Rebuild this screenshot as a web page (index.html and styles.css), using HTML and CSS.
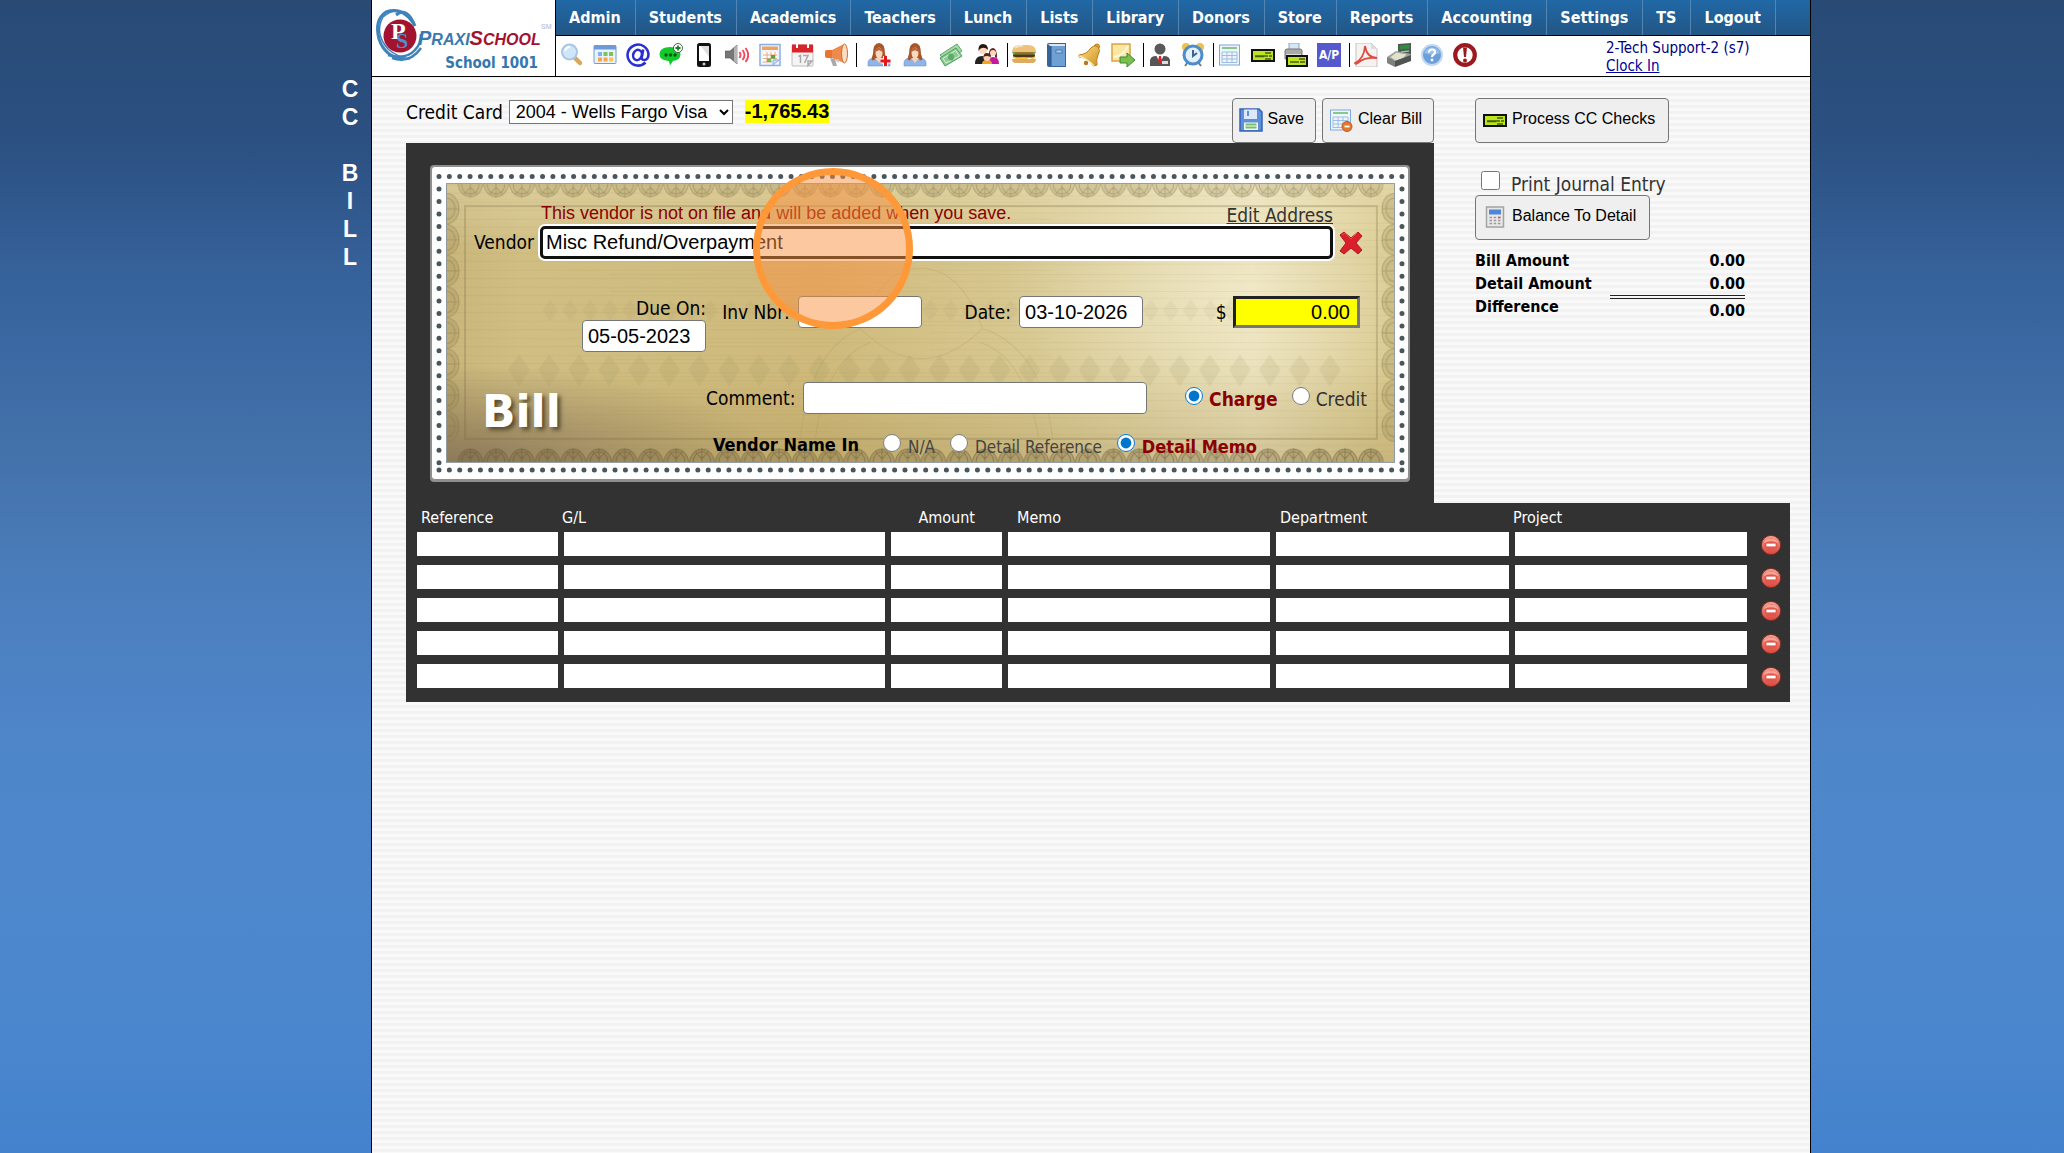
FILE: index.html
```
<!DOCTYPE html>
<html lang="en">
<head>
<meta charset="utf-8">
<title>CC Bill - PraxiSchool</title>
<link rel="stylesheet" href="styles.css">
</head>
<body>
<svg class="defs" aria-hidden="true">
  <defs>
    <linearGradient id="gGold" x1="0" y1="0" x2="1" y2="1"><stop offset="0" stop-color="#fbe08a"/><stop offset="1" stop-color="#cf8f1f"/></linearGradient>
    <linearGradient id="gRed" x1="0" y1="0" x2="0" y2="1"><stop offset="0" stop-color="#f7a08f"/><stop offset="1" stop-color="#d8463c"/></linearGradient>
    <symbol id="i-check" viewBox="0 0 24 24"><rect x="1" y="7" width="22" height="11" fill="#b9e61d" stroke="#111" stroke-width="2"/><path d="M4 13h11M14 10h6M15 13h2M18 13h3M4 13.500h9M14 16h6" stroke="#4d5d0b" stroke-width="1.500"/></symbol>
    <symbol id="i-sheet" viewBox="0 0 24 24"><rect x="1.500" y="2" width="20" height="20" fill="#eef5fd" stroke="#7fa8dc"/><rect x="4" y="4" width="15" height="2" fill="#86c98a"/><path d="M4 9h15M4 12.500h15M4 16h15M4 19.500h15M4 9v10.500M9 9v10.500M14 9v10.500M19 9v10.500" stroke="#9dbde6" fill="none"/></symbol>
    <symbol id="i-minus" viewBox="0 0 24 24"><circle cx="12" cy="12" r="10.500" fill="url(#gRed)" stroke="#7a2b26"/><circle cx="12" cy="12" r="7" fill="#e2574c"/><path d="M4 10a9 9 0 0 1 16 0q-8-4-16 0z" fill="#fbc3b8" opacity=".7"/><rect x="7" y="10.500" width="10" height="3" fill="#fff"/></symbol>
    <symbol id="i-woman" viewBox="0 0 24 24"><path d="M1 23v-4q1-4 7-4h8q6 0 7 4v4z" fill="#8fb4e8" stroke="#6f95cf" stroke-width=".6"/><path d="M5 17q-1-1 1-6 0-11 6-11t6 11q2 5 1 6-2 1-3-1H8q-1 2-3 1z" fill="#a8562c"/><path d="M8 15h8l-4 5z" fill="#f6d3b3"/><ellipse cx="12" cy="10" rx="3.500" ry="5.500" fill="#f8d9bd"/><path d="M8 8q2-5 5-3 3 1 3 4-3-1-4-2-2 2-4 1z" fill="#b9683a"/></symbol>
  </defs>
</svg>

<div class="page">
  <aside class="side"><h1 class="side-title"><span>C</span><span>C</span><span>&nbsp;</span><span>B</span><span>I</span><span>L</span><span>L</span></h1></aside>

  <div class="app">
    <header class="top">
      <div class="brand">
        <svg class="logo" viewBox="0 0 183 58" role="img" aria-label="PraxiSchool">
          <g fill="none" stroke="#3f83bd"><path d="M24 15Q35 6 43 26M43 26Q32 6 14 12Q2 20 7 39Q13 57 31 59" stroke-width="3"/><path d="M39 20Q27 3 11 17Q2 33 16 49Q25 57 38 59" stroke-width="1.500"/><path d="M16 55Q34 60 43 50Q49 44 49 34M20 58Q38 64 49 48" stroke-width="2.500"/></g>
          <circle cx="28" cy="36" r="16.500" fill="#a3122e"/>
          <text x="19" y="39" class="mono-p">P</text><text x="24" y="48" class="mono-s">S</text>
          <text x="46" y="45" class="mark">P<tspan class="mark-sm">RAXI</tspan><tspan class="mark-red">S</tspan><tspan class="mark-sm mark-red">CHOOL</tspan></text>
          <text x="169" y="29" class="sm">SM</text>
        </svg>
        <div class="school">School 1001</div>
      </div>
      <div class="bars">
        <nav class="menu">
          <a href="#">Admin</a><a href="#">Students</a><a href="#">Academics</a><a href="#">Teachers</a><a href="#">Lunch</a><a href="#">Lists</a><a href="#">Library</a><a href="#">Donors</a><a href="#">Store</a><a href="#">Reports</a><a href="#">Accounting</a><a href="#">Settings</a><a href="#">TS</a><a href="#">Logout</a>
        </nav>
        <div class="tools">
          <div class="group">
            <button aria-label="Search"><svg viewBox="0 0 24 24"><path d="M14 14l6 6" stroke="#d9a65c" stroke-width="4.500" stroke-linecap="round"/><circle cx="9.500" cy="9" r="7.500" fill="#cfe6fa" stroke="#a9c6e6" stroke-width="2"/><path d="M5 8q1-4 5-4" stroke="#fff" stroke-width="2" fill="none"/></svg></button>
            <button aria-label="Calendar"><svg viewBox="0 0 24 24"><rect x="1" y="2.500" width="22" height="18" rx="1" fill="#eaf3fd" stroke="#6c9bd8"/><rect x="1" y="2.500" width="22" height="4" fill="#6c9bd8"/><path d="M5 9h4v4H5z" fill="#7db4ee"/><path d="M10.500 9h4v4h-4zM16 9h4v4h-4z" fill="#7fc257"/><path d="M5 14.500h4v4H5zM10.500 14.500h4v4h-4z" fill="#f3a64a"/><path d="M16 14.500h4v4h-4z" fill="#f5c84f"/></svg></button>
            <button aria-label="Email"><svg viewBox="0 0 24 24" fill="none" stroke="#2a2fd0" stroke-width="2.600"><path d="M19.500 19.500A10.500 10.500 0 1 1 22.500 11q0 6-4.500 6-3 0-2-4l1.200-6.500"/><ellipse cx="11.500" cy="12" rx="4.300" ry="5.200" transform="rotate(20 11.500 12)"/></svg></button>
            <button aria-label="Text message"><svg viewBox="0 0 24 24"><path d="M11 4q10 0 10.500 7 0 6-7.500 7l-3 4.500-1-4.500Q0 17 .500 11 1 4 11 4z" fill="#13c92c"/><circle cx="7" cy="12" r="1.700" fill="#04550f"/><circle cx="11.500" cy="12" r="1.700" fill="#04550f"/><circle cx="16" cy="12" r="1.700" fill="#04550f"/><circle cx="19" cy="5" r="4.500" fill="#fff" stroke="#333" stroke-width=".8"/><path d="M19 2.500v5M16.500 5h5" stroke="#13851f" stroke-width="1.800"/></svg></button>
            <button aria-label="Phone"><svg viewBox="0 0 24 24"><rect x="5" y="0" width="14" height="24" rx="2.500" fill="#111"/><rect x="7" y="3" width="10" height="15" fill="#fff"/><path d="M9 3h8v11z" fill="#ddd"/><circle cx="12" cy="21" r="1.500" fill="#ccc"/></svg></button>
            <button aria-label="Announcement"><svg viewBox="0 0 24 24"><path d="M0 8h5l7-6v19l-7-6H0z" fill="#777" stroke="#555" stroke-width=".6"/><path d="M9 5v13l3 3V2z" fill="#b5b5b5"/><path d="M14.500 9q2 3 0 6M17.500 7q4 5 0 10M20.500 5q5.500 7 0 14" stroke="#ee4a5c" stroke-width="1.900" fill="none"/></svg></button>
            <button aria-label="Schedule"><svg viewBox="0 0 24 24"><rect x="2" y="1.500" width="20" height="21" fill="#edf4fc" stroke="#8ab0e2" stroke-width="1.500"/><rect x="4" y="3.500" width="16" height="3.500" fill="#f0a060"/><path d="M5 9h14v10H5z" fill="#fff"/><path d="M9 9v10M13 9v10M17 9v10M5 12h14M5 15.500h14M5 19h9" stroke="#e9a77c"/><path d="M13 12h4v3.500h-4z" fill="#4fa64f"/><path d="M9 15.500h4V19H9z" fill="#6dbb63"/><path d="M15 22v-5h6z" fill="#c9def5" stroke="#8ab0e2"/></svg></button>
            <button aria-label="Events"><svg viewBox="0 0 24 24"><rect x="1" y="2" width="21" height="21" rx="1" fill="#f4f4f4" stroke="#bdbdbd"/><path d="M1 1.500h21v8H1z" fill="#d8252b"/><path d="M5 0h2v5H5zM16 0h2v5h-2z" fill="#fff"/><path d="M7.500 13.500l2-1V20M12 12.500h5L13.500 20M17 18h4l-4 4.500z" fill="none" stroke="#aaa" stroke-width="1.500"/></svg></button>
            <button aria-label="Broadcast"><svg viewBox="0 0 24 24"><path d="M1 9q0-2 2-2h5v8H3q-2 0-2-2z" fill="#e87430"/><path d="M8 7L20 1v19L8 15z" fill="#ed8a4c"/><ellipse cx="20.500" cy="10.500" rx="3" ry="9.500" fill="#fbdcc4" stroke="#cf6d2f"/><path d="M6 15l3 8h4l-2-7z" fill="#a9a9a9"/><path d="M11 17l4-1v4z" fill="#c9c9c9"/></svg></button>
          </div>
          <div class="group people">
            <button aria-label="Add student"><svg viewBox="0 0 24 24"><use href="#i-woman"/><path d="M18.500 13v10M13.500 18h10" stroke="#fff" stroke-width="5"/><path d="M18.500 13v10M13.500 18h10" stroke="#e6141b" stroke-width="3"/></svg></button>
            <button aria-label="Student"><svg viewBox="0 0 24 24"><use href="#i-woman"/></svg></button>
            <button aria-label="Payments"><svg viewBox="0 0 24 24"><path d="M1 12L18 1l5 7L7 19z" fill="#a5d8a5" stroke="#5aa868"/><path d="M1 15l16-10 6 8L6 23z" fill="#8ccb92" stroke="#4f9e5e"/><path d="M4 15.500l12.500-8 4 5.500L7 20z" fill="none" stroke="#d5f0d4"/><ellipse cx="12" cy="14" rx="3" ry="3.500" fill="#5dab6b"/></svg></button>
            <button aria-label="Family"><svg viewBox="0 0 24 24"><path d="M0 21q0-8 7-8 5 0 6 8z" fill="#222"/><path d="M12 21q0-7 6-7t6 7z" fill="#c4189f"/><circle cx="8" cy="7" r="4" fill="#fbd9bd"/><path d="M3.500 8Q3 1 8 1t5 6q-3-3-6-2-2 0-3.500 3z" fill="#27150f"/><path d="M14 15q-1-10 4-10 4 0 4 10l-2-1V9h-4v5z" fill="#6b1e1c"/><circle cx="18" cy="10" r="3" fill="#fbd9bd"/><path d="M7 21q0-4 5-4t5 4z" fill="#f4a51f"/><circle cx="12" cy="14.500" r="3.500" fill="#f8d2b4"/><path d="M8.500 14q0-4 3.500-4t3.500 4q-4-2-7 0z" fill="#53281a"/></svg></button>
          </div>
          <div class="group">
            <button aria-label="Lunch"><svg viewBox="0 0 24 24"><path d="M0 9q0-7 8-7h8q8 0 8 7z" fill="#edc27a"/><path d="M3 5q4-3 8-2" stroke="#faead0" stroke-width="1.500" fill="none"/><path d="M0 9h24l-2 3H2z" fill="#62a23a"/><path d="M3 9.500h18v1.500H3z" fill="#e5452f"/><path d="M1 11.500h22v3H1z" fill="#5c3118"/><path d="M1 14l5 2 6-1 6 2 5-3" stroke="#f5c43c" stroke-width="1.500" fill="none"/><path d="M0 16h24q0 4-4 4H4q-4 0-4-4z" fill="#deab61"/></svg></button>
            <button aria-label="Gradebook"><svg viewBox="0 0 24 24"><path d="M4 0h17v24H4q-2 0-2-2V2q0-2 2-2z" fill="#34649c"/><path d="M6 3h14v20H6z" fill="#6fa0d4"/><path d="M3 1h17v2H5z" fill="#dbe6f2"/><path d="M6 3v20" stroke="#2a5487"/><rect x="11" y="7" width="6" height="3" fill="#a9cbed" stroke="#34649c" stroke-width=".7"/></svg></button>
            <button aria-label="Alerts"><svg viewBox="0 0 24 24"><circle cx="19" cy="3.500" r="2.500" fill="#e0a638" stroke="#b87b18"/><path d="M1 12q8-1 11-6 4-5 8-2 3 3 0 8-2 4-1 10l-4 1Q12 15 1 14z" fill="url(#gGold)" stroke="#b97d17"/><path d="M1 13q9 3 15 10" stroke="#fbe9ae" stroke-width="1.500" fill="none"/><circle cx="8" cy="20" r="2.200" fill="#b2791c"/></svg></button>
            <button aria-label="Send note"><svg viewBox="0 0 24 24"><rect x="1" y="1" width="18" height="17" fill="#fce6a4" stroke="#dba441" stroke-width="1.500"/><path d="M3 14q9-1 14-11" stroke="#fff7dc" stroke-width="2" fill="none"/><path d="M9 14h7v-4l8 7-8 7v-4H9z" fill="#79bf4f" stroke="#3c8a2c"/></svg></button>
          </div>
          <div class="group">
            <button aria-label="Staff"><svg viewBox="0 0 24 24"><path d="M2 23v-6q1-4 6-4h8q5 0 6 4v6z" fill="#565656"/><circle cx="12" cy="6" r="5.500" fill="#595959"/><path d="M8 12l4 8 4-8z" fill="#fff"/><path d="M11 13h2l1 5-2 3-2-3z" fill="#d8252b"/><path d="M14 18h6v3h-6z" fill="#ddd"/></svg></button>
            <button aria-label="Time clock"><svg viewBox="0 0 24 24"><circle cx="5" cy="4" r="4" fill="#ecc14c"/><circle cx="19" cy="4" r="4" fill="#ecc14c"/><path d="M4 23l3-4M20 23l-3-4" stroke="#777" stroke-width="2"/><circle cx="12" cy="12" r="9" fill="#e4f0fb" stroke="#4d8dcb" stroke-width="3"/><path d="M12 7v6l4-3" stroke="#39668f" stroke-width="2" fill="none"/></svg></button>
          </div>
          <div class="group">
            <button aria-label="Ledger"><svg><use href="#i-sheet"/></svg></button>
            <button aria-label="Checks"><svg><use href="#i-check"/></svg></button>
            <button aria-label="Print checks"><svg viewBox="0 0 24 24"><path d="M5 0h10v8H5z" fill="#d5e6f7" stroke="#8aa"/><path d="M1 8q0-2 2-2h13q2 0 2 2v8H1z" fill="#a9a9a9" stroke="#777"/><path d="M2 12h15" stroke="#ddd" stroke-width="2"/><rect x="3" y="13" width="20" height="10" fill="#b9e61d" stroke="#111" stroke-width="2"/><path d="M6 19h9M15 16h6M16 19h5" stroke="#4d5d0b" stroke-width="1.500"/></svg></button>
            <button class="ap">A/P</button>
          </div>
          <div class="group">
            <button aria-label="PDF"><svg viewBox="0 0 24 24"><path d="M2 0h15l6 6v18H2z" fill="#f5f3f1" stroke="#c5c1bd"/><path d="M17 0v6h6z" fill="#ddd"/><path d="M1 20q9-4 10-17 2 12 12 12-12-1-18 4-3 3-4 1z" fill="none" stroke="#e04a41" stroke-width="1.800"/></svg></button>
            <button aria-label="Cash register"><svg viewBox="0 0 24 24"><path d="M11 1l13-1v13l-13 1z" fill="#4c5852"/><path d="M12.500 2.500l10-1v4l-10 1z" fill="#2f8d3c"/><path d="M14 9l8-1" stroke="#aab5ae" stroke-width="1.500"/><path d="M0 14l9-6 15 3-3 6-13 4z" fill="#9da39e"/><path d="M3.500 14l6-4.500 10 2-4 4-7 2z" fill="#dfe3c9"/><path d="M0 14l8 4v6l-8-4z" fill="#7d817d"/><path d="M8 18l16-6v6L8 24z" fill="#4f5451"/></svg></button>
            <button aria-label="Help"><svg viewBox="0 0 24 24"><circle cx="12" cy="12" r="10" fill="#6b9fdc" stroke="#c2d7f0" stroke-width="2"/><path d="M4 10a8.500 8.500 0 0 1 16 0q-8 3-16 0z" fill="#a9caee" opacity=".7"/><path d="M9 9.500q0-3 3-3t3 2.500q0 1.500-1.500 2.500T12 14" stroke="#fff" stroke-width="2.200" fill="none"/><circle cx="12" cy="17" r="1.400" fill="#fff"/></svg></button>
            <button aria-label="Alert"><svg viewBox="0 0 24 24"><circle cx="12" cy="12" r="9.800" fill="#fff" stroke="#9c1a1f" stroke-width="4.200"/><path d="M10 4.500h4l-1 9.500h-2z" fill="#9c1a1f"/><circle cx="12" cy="17.500" r="2" fill="#9c1a1f"/></svg></button>
          </div>
          <div class="user"><span>2-Tech Support-2 (s7)</span><a href="#">Clock In</a></div>
        </div>
      </div>
    </header>

    <main class="content">
      <section class="main-col">
        <div class="actions">
          <label for="card">Credit Card</label>
          <select id="card"><option>2004 - Wells Fargo Visa</option></select>
          <strong class="balance">-1,765.43</strong>
          <div class="buttons">
            <button class="btn"><svg viewBox="0 0 24 24"><path d="M1 1h19l3 3v19H1z" fill="#5d8fdb" stroke="#3565b5" stroke-width="1.500"/><path d="M5 1.500h13V11H5z" fill="#dde9fa"/><path d="M8 3h2v5H8z" fill="#5d8fdb"/><path d="M5 14.500h14V22H5z" fill="#f4faf2"/><path d="M6.500 16.500h11M6.500 19.500h11" stroke="#79bd6a" stroke-width="2"/></svg>Save</button>
            <button class="btn"><svg viewBox="0 0 24 24"><use href="#i-sheet"/><circle cx="18" cy="18.500" r="5" fill="#e5792b" stroke="#c2571a"/><path d="M15.500 18.500h5" stroke="#fff" stroke-width="1.800"/></svg>Clear Bill</button>
          </div>
        </div>

        <div class="check-wrap">
          <form class="check">
            <svg class="check-art" viewBox="0 0 979 316" preserveAspectRatio="none" aria-hidden="true">
              <defs>
                <linearGradient id="paper" x1="0" y1="0" x2="1" y2="0"><stop offset="0" stop-color="#c8b67b"/><stop offset=".08" stop-color="#d0be83"/><stop offset=".4" stop-color="#cfba7c"/><stop offset=".62" stop-color="#d8c993"/><stop offset=".85" stop-color="#e9e0ba"/><stop offset="1" stop-color="#d9c98f"/></linearGradient>
                <linearGradient id="shade" x1="0" y1="0" x2="0" y2="1"><stop offset="0" stop-color="#fffbe0" stop-opacity=".25"/><stop offset=".25" stop-color="#fffbe0" stop-opacity="0"/><stop offset=".65" stop-color="#9a8040" stop-opacity="0"/><stop offset="1" stop-color="#9a8040" stop-opacity=".28"/></linearGradient>
                <radialGradient id="corner" cx="0" cy="1" r=".35"><stop offset="0" stop-color="#7d6a55" stop-opacity=".75"/><stop offset="1" stop-color="#7d6a55" stop-opacity="0"/></radialGradient>
                <radialGradient id="glow"><stop offset="0" stop-color="#fffbe6" stop-opacity=".3"/><stop offset="1" stop-color="#fffbe6" stop-opacity="0"/></radialGradient>
                <pattern id="fan" width="25.700" height="15" patternUnits="userSpaceOnUse" x="27.500" y="19"><path d="M.500 0a12.400 14 0 0 0 24.700 0M4 0a8.800 10 0 0 0 17.600 0M12.800 0v14M12.800 3l-7 8M12.800 3l7 8" fill="#8a7c4c" fill-opacity=".2" stroke="#7d7045" stroke-opacity=".4"/></pattern>
                <pattern id="fanUp" width="25.700" height="15" patternUnits="userSpaceOnUse" x="27.500" y="281"><path d="M.500 15a12.400 14 0 0 1 24.700 0M4 15a8.800 10 0 0 1 17.600 0M12.800 15V1M12.800 12l-7-8M12.800 12l7-8" fill="#6f6038" fill-opacity=".25" stroke="#5f5334" stroke-opacity=".5"/></pattern>
                <pattern id="fanSide" width="13" height="31" patternUnits="userSpaceOnUse" x="17" y="28"><path d="M0 .500a12 15 0 0 1 0 30M0 5a8 10.500 0 0 1 0 21M0 15.500h12" fill="#8a7c4c" fill-opacity=".2" stroke="#7d7045" stroke-opacity=".4"/></pattern>
                <pattern id="fanSideR" width="13" height="31" patternUnits="userSpaceOnUse" x="950" y="28"><path d="M13 .500a12 15 0 0 0 0 30M13 5a8 10.500 0 0 0 0 21M13 15.500H1" fill="#8a7c4c" fill-opacity=".2" stroke="#7d7045" stroke-opacity=".4"/></pattern>
                <pattern id="gem" width="30" height="32" patternUnits="userSpaceOnUse" x="74" y="189"><path d="M15 0l11 15-11 17L4 15z" fill="#8d8255" fill-opacity=".12"/></pattern>
                <pattern id="gem2" width="20" height="22" patternUnits="userSpaceOnUse" x="110" y="134"><path d="M10 0l8 11-8 11-8-11z" fill="#8d8255" fill-opacity=".08"/></pattern>
                <pattern id="grain" width="979" height="17" patternUnits="userSpaceOnUse"><path d="M0 3h620M180 7h799M0 11h400M500 14h479" stroke="#8c7638" stroke-opacity=".09"/></pattern>
              </defs>
              <rect width="979" height="316" rx="4" fill="#8f8f8f"/>
              <rect x="2" y="2" width="975" height="311" rx="3" fill="#fff"/>
              <rect x="16" y="18" width="948" height="279" fill="#8f9aa0"/>
              <rect x="17" y="19" width="946" height="277" fill="url(#paper)"/>
              <ellipse cx="800" cy="130" rx="230" ry="110" fill="url(#glow)"/>
              <rect x="17" y="19" width="946" height="277" fill="url(#shade)"/>
              <rect x="17" y="19" width="946" height="277" fill="url(#corner)"/>
              <rect x="17" y="19" width="946" height="277" fill="url(#grain)"/>
              <rect x="35" y="41" width="911" height="232" fill="none" stroke="#6f6440" stroke-opacity=".25" stroke-width="2"/>
              <g fill="none" stroke="#a08b50" stroke-opacity=".2"><path d="M370 273q10-90 60-110 20-60 60-60t62 60q60 20 70 110M385 273q10-80 55-96M608 273q-12-80-58-96M430 163q60 60 122 0"/></g>
              <rect x="74" y="189" width="840" height="32" fill="url(#gem)"/>
              <rect x="110" y="134" width="780" height="22" fill="url(#gem2)"/>
              <rect x="27.500" y="19" width="925" height="15" fill="url(#fan)"/>
              <rect x="27.500" y="281" width="925" height="15" fill="url(#fanUp)"/>
              <rect x="17" y="28" width="13" height="248" fill="url(#fanSide)"/>
              <rect x="950" y="28" width="13" height="248" fill="url(#fanSideR)"/>
              <g fill="none" stroke="#4a565e" stroke-width="5" stroke-linecap="round">
                <path d="M9 11.500H972" stroke-dasharray="0 10.344"/><path d="M9 304H972" stroke-dasharray="0 10.344"/>
                <path d="M9 24V298" stroke-dasharray="0 12.400"/><path d="M971 24V298" stroke-dasharray="0 12.400"/>
              </g>
            </svg>

            <div class="vendor">
              <p class="notice">This vendor is not on file and will be added when you save.</p>
              <a class="edit" href="#">Edit Address</a>
              <label for="vendor">Vendor</label>
              <input id="vendor" class="vendor-input" type="text" value="Misc Refund/Overpayment">
              <button type="button" class="clear" aria-label="Clear vendor"><svg viewBox="0 0 24 24"><path d="M1 4l4-3 7 6 7-6 4 4-6 7 6 7-4 4-7-6-7 6-4-3 6-8z" fill="#d9202a" stroke="#b5161f" stroke-linejoin="round"/><path d="M3 4l3-2 6 6 6-6" stroke="#f06a6a" fill="none" opacity=".6"/></svg></button>
            </div>

            <div class="facts">
              <div class="due"><label for="due">Due On:</label><input id="due" class="short" type="text" value="05-05-2023"></div>
              <div class="fact"><label for="inv">Inv Nbr:</label><input id="inv" class="short" type="text"></div>
              <div class="fact"><label for="date">Date:</label><input id="date" class="short" type="text" value="03-10-2026"></div>
              <div class="fact money"><label for="amt">$</label><input id="amt" class="amount" type="text" value="0.00"></div>
            </div>

            <div class="foot">
              <div class="bill">Bill</div>
              <div class="comment">
                <label for="comment">Comment:</label><input id="comment" type="text">
                <div class="kinds">
                  <input type="radio" id="charge" name="kind" checked><label for="charge">Charge</label>
                  <input type="radio" id="credit" name="kind"><label for="credit">Credit</label>
                </div>
              </div>
              <div class="names">
                <strong>Vendor Name In</strong>
                <input type="radio" id="na" name="where"><label for="na">N/A</label>
                <input type="radio" id="ref" name="where"><label for="ref">Detail Reference</label>
                <input type="radio" id="memo" name="where" checked><label for="memo">Detail Memo</label>
              </div>
            </div>
            <span class="pointer" aria-hidden="true"></span>
          </form>
        </div>
      </section>

      <aside class="panel">
        <button class="btn"><svg><use href="#i-check"/></svg>Process CC Checks</button>
        <div class="print"><input type="checkbox" id="print"><label for="print">Print Journal Entry</label></div>
        <button class="btn"><svg viewBox="0 0 24 24"><rect x="3.500" y="2" width="17" height="20" fill="#e8e8e8" stroke="#a3a3a3" stroke-width="1.500"/><rect x="6" y="4.500" width="12" height="5" fill="#4f86d6"/><path d="M6.500 12.500h11M6.500 15.500h11M6.500 18.500h11" stroke="#999" stroke-width="1.600" stroke-dasharray="2.500 1.700"/><path d="M15 12.500h2.500" stroke="#e05a4a" stroke-width="1.600"/></svg>Balance To Detail</button>
        <dl class="totals">
          <dt>Bill Amount</dt><dd>0.00</dd>
          <dt>Detail Amount</dt><dd>0.00</dd>
          <dt>Difference</dt><dd class="sum">0.00</dd>
        </dl>
      </aside>

      <section class="lines">
        <table>
          <colgroup><col class="c-ref"><col class="c-gl"><col class="c-amt"><col class="c-memo"><col class="c-dept"><col class="c-proj"><col class="c-del"></colgroup>
          <thead><tr><th>Reference</th><th class="near">G/L</th><th class="num">Amount</th><th class="far">Memo</th><th>Department</th><th class="near">Project</th><th></th></tr></thead>
          <tbody>
            <tr><td><input aria-label="Reference 1"></td><td><input aria-label="G/L 1"></td><td><input aria-label="Amount 1"></td><td><input aria-label="Memo 1"></td><td><input aria-label="Department 1"></td><td><input aria-label="Project 1"></td><td><button aria-label="Remove line 1"><svg><use href="#i-minus"/></svg></button></td></tr>
            <tr><td><input aria-label="Reference 2"></td><td><input aria-label="G/L 2"></td><td><input aria-label="Amount 2"></td><td><input aria-label="Memo 2"></td><td><input aria-label="Department 2"></td><td><input aria-label="Project 2"></td><td><button aria-label="Remove line 2"><svg><use href="#i-minus"/></svg></button></td></tr>
            <tr><td><input aria-label="Reference 3"></td><td><input aria-label="G/L 3"></td><td><input aria-label="Amount 3"></td><td><input aria-label="Memo 3"></td><td><input aria-label="Department 3"></td><td><input aria-label="Project 3"></td><td><button aria-label="Remove line 3"><svg><use href="#i-minus"/></svg></button></td></tr>
            <tr><td><input aria-label="Reference 4"></td><td><input aria-label="G/L 4"></td><td><input aria-label="Amount 4"></td><td><input aria-label="Memo 4"></td><td><input aria-label="Department 4"></td><td><input aria-label="Project 4"></td><td><button aria-label="Remove line 4"><svg><use href="#i-minus"/></svg></button></td></tr>
            <tr><td><input aria-label="Reference 5"></td><td><input aria-label="G/L 5"></td><td><input aria-label="Amount 5"></td><td><input aria-label="Memo 5"></td><td><input aria-label="Department 5"></td><td><input aria-label="Project 5"></td><td><button aria-label="Remove line 5"><svg><use href="#i-minus"/></svg></button></td></tr>
          </tbody>
        </table>
      </section>
    </main>
  </div>
</div>
</body>
</html>
```
FILE: styles.css
```
:root {
  --ui: "DejaVu Sans Condensed", "DejaVu Sans", Tahoma, sans-serif;
  --form: "Liberation Sans", Arial, sans-serif;
  --dark: #323232;
}
* { box-sizing: border-box; }
body { margin: 0; font: 19px/24px var(--ui); color: #000; }
input, select, button { font-family: var(--form); margin: 0; }
p, h1, dl, dd { margin: 0; }
.defs { position: absolute; width: 0; height: 0; }

.page {
  display: grid;
  grid-template-columns: 371fr 1440fr 253fr;
  min-height: 100vh;
  background: linear-gradient(#284a75, #2b5081 12%, #37639d 25%, #4472ab 40%, #4a7dbb 50%, #4f86ca 64%, #4b87cd 88%, #4482cd);
}
.side { display: flex; justify-content: flex-end; padding: 75px 10px 0 0; }
.side-title { display: flex; flex-direction: column; align-items: center; width: 22px; color: #fff; font: bold 23px/28px var(--form); }

.app { background: repeating-linear-gradient(#f9f9f9 0 3px, #f2f2f2 3px 6px); border: solid #000; border-width: 0 1px; }

/* Header */
.top { display: flex; height: 77px; background: #fff; border-bottom: 1px solid #000; }
.brand { position: relative; width: 184px; border-right: 1px solid #000; }
.logo { display: block; width: 183px; height: 58px; overflow: visible; }
.mark { font: italic bold 20px var(--form); fill: #3a78b0; }
.mark-sm { font-size: 16px; }
.mark-red { fill: #a3122e; }
.sm { font: 7px var(--form); fill: #9db9d4; }
.mono-p { font: bold 24px "Liberation Serif", serif; fill: #fff; }
.mono-s { font: bold 22px "Liberation Serif", serif; fill: #4d8fca; }
.school { padding-right: 17px; color: #3377ad; font-size: 15px; line-height: 10px; font-weight: bold; text-align: right; }
.bars { flex: 1; min-width: 0; }
.menu { display: flex; height: 36px; border-bottom: 1px solid #000; background: linear-gradient(#2068a6, #235685); }
.menu a { padding: 0 14px 0 13px; border-right: 1px solid #5285b4; color: #fff; font-size: 16px; line-height: 35px; font-weight: bold; text-decoration: none; }
.tools { display: flex; align-items: center; height: 38px; padding-left: 4px; }
.group { display: flex; gap: 9px; padding-right: 8px; }
.group + .group { padding-left: 4px; border-left: 1px solid #000; }
.group + .group.people { gap: 12px; padding-left: 10px; }
.group button { display: block; width: 24px; height: 24px; padding: 0; border: 0; background: none; }
.tools svg { display: block; width: 24px; height: 24px; }
.group .ap { background: #5558cf; color: #fff; font: bold 12px/24px var(--ui); }
.user { display: flex; flex-direction: column; margin-left: auto; width: 204px; padding-top: 3px; font-size: 15px; line-height: 18px; color: #000080; white-space: nowrap; }
.user a { color: #0000a0; align-self: flex-start; }

/* Content */
.content { display: grid; grid-template-columns: minmax(0, 1028fr) minmax(0, 315fr); column-gap: 41px; padding: 21px 20px 0 34px; }
.actions { display: flex; align-items: flex-start; height: 45px; }
.actions label { line-height: 28px; margin-right: 6px; }
.actions select { width: 224px; height: 24px; margin-top: 2px; padding: 0 0 0 2px; border: 1px solid #767676; background: #fff; font-size: 18px; color: #000; }
.balance { margin: 2px 0 0 12px; background: #ff0; font: bold 20px/23px var(--form); }
.buttons { display: flex; gap: 6px; margin-left: auto; }
.btn { display: flex; align-items: flex-start; gap: 5px; height: 45px; padding: 9px 11px 0 6px; border: 1px solid #767676; border-radius: 4px; background: #efefef; color: #000; font-size: 16px; line-height: 21px; white-space: nowrap; }
.btn svg { width: 24px; height: 24px; }

.check-wrap { padding: 22px 24px 21px; background: var(--dark); }
.check { position: relative; height: 317px; padding: 36px 0 0; }
.check > div { position: relative; }
.check-art { position: absolute; inset: 0; width: 100%; height: 100%; }
.check input[type="text"] { height: 32px; padding: 0 5px; border: 1px solid #767676; border-radius: 4px; background: #fff; font-size: 20px; color: #000; }
.vendor { display: grid; grid-template-columns: 104px minmax(0, 1fr) auto 24px; grid-template-rows: 25px 33px; padding-right: 47px; }
.notice { grid-column: 2; color: #8b0000; font: 18px/24px var(--form); margin-left: 7px; }
.edit { z-index: 1; margin-right: 6px; color: #333; font-size: 19px; line-height: 28px; text-underline-offset: 1px; }
.vendor label { grid-column: 1; text-align: right; line-height: 32px; }
.check input.vendor-input { grid-column: 2 / 4; width: auto; height: 33px; margin: 0 6px; border: 3px solid #101010; border-radius: 5px; padding: 0 3px; box-shadow: 0 0 0 2px #fff; }
.clear { align-self: center; width: 24px; height: 24px; padding: 0; border: 0; background: none; }
.clear svg { display: block; width: 24px; height: 24px; }

.facts { display: grid; grid-template-columns: minmax(0, 140fr) minmax(0, 242fr) minmax(0, 251fr) minmax(0, 144fr); padding: 37px 50px 0 152px; }
.due { display: flex; flex-direction: column; width: 124px; }
.due label { text-align: right; line-height: 24px; }
.fact { display: flex; align-items: flex-start; gap: 8px; }
.fact label { line-height: 32px; white-space: nowrap; }
.check .short { width: 124px; }
.money { gap: 6px; }
.check input.amount { flex: 1; min-width: 0; padding-right: 7px; border: 3px inset #767676; border-radius: 0; background: #ff0; text-align: right; }

.foot { display: grid; grid-template-columns: 276px minmax(0, 1fr); padding: 30px 43px 0 0; }
.bill { grid-row: 1 / 3; padding: 7px 0 0 52px; color: #fff; font: bold 44px/46px "DejaVu Sans", Verdana, sans-serif; text-shadow: 3px 3px 4px #554a30; }
.comment, .kinds, .names { display: flex; align-items: center; }
.comment input[type="text"] { flex: 1; min-width: 0; margin-left: 7px; }
.kinds { margin-left: 38px; color: #333; }
.names { padding: 16px 0 0 7px; color: #444; font-size: 17px; line-height: 24px; }
.names strong { margin-right: 24px; color: #000; font-size: 18px; }
input[type="radio"] { width: 18px; height: 18px; margin-bottom: 4px; accent-color: #0075ce; background: #fff; }
.kinds label { padding-top: 2px; margin: 0 14px 0 6px; }
.names label { padding-top: 5px; margin: 0 15px 0 7px; }
.names :checked + label { font-size: 18px; }
.kinds label:last-child, .names label:last-child { margin-right: 0; }
input[type="radio"]:checked + label { color: #8b0000; font-weight: bold; }
.pointer { position: absolute; left: 323px; top: 3px; width: 160px; height: 161px; border: 7px solid #ff9838; border-radius: 50%; background: rgba(250, 145, 65, .5); pointer-events: none; }

/* Side panel */
.panel { display: flex; flex-direction: column; align-items: flex-start; }
.panel .btn { padding: 9px 13px 0 7px; }
.print { display: flex; padding: 28px 0 0 6px; height: 52px; color: #333; }
.print input { width: 19px; height: 19px; margin-right: 11px; }
.print label { line-height: 26px; }
.totals { display: grid; grid-template-columns: 135px 135px; grid-auto-rows: 23px; margin-top: 9px; font-size: 16px; font-weight: bold; line-height: 23px; }
.totals dd { text-align: right; }
.totals .sum { align-self: start; border-top: 4px double #222; }

/* Detail lines */
.lines { grid-column: 1 / 3; padding: 0 0 10px 8px; background: var(--dark); }
.lines table { width: 100%; table-layout: fixed; border-collapse: collapse; }
.c-ref { width: 147px; }
.c-gl { width: 327px; }
.c-amt { width: 117px; }
.c-memo { width: 268px; }
.c-dept { width: 239px; }
.c-proj { width: 238px; }
.c-del { width: 40px; }
.lines th { height: 24px; padding: 6px 7px 0; color: #fff; font-size: 16px; font-weight: normal; line-height: 18px; text-align: left; }
.lines .near { padding-left: 1px; }
.lines .far { padding-left: 12px; }
.lines .num { padding-right: 30px; text-align: right; }
.lines td { height: 33px; padding: 0 3px; }
.lines td input { display: block; width: 100%; height: 24px; border: 0; padding: 0 4px; background: #fff; font-size: 16px; }
.lines button { display: block; width: 22px; height: 22px; margin: 2px 0 0 7px; padding: 0; border: 0; background: none; }
.lines svg { display: block; width: 22px; height: 22px; }
```
